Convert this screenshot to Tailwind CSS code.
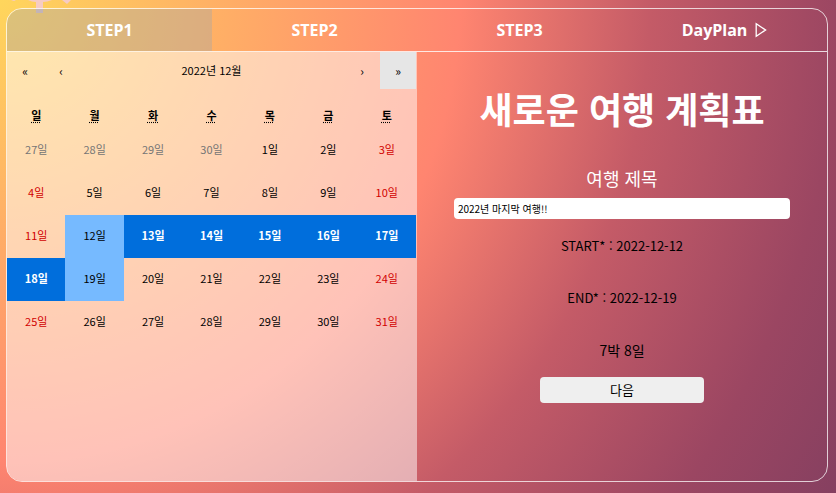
<!DOCTYPE html>
<html lang="ko">
<head>
<meta charset="utf-8">
<meta name="viewport" content="width=device-width, initial-scale=1">
<title>DayPlan</title>
<script src="https://cdn.jsdelivr.net/npm/@tailwindcss/browser@4"></script>
</head>
<body class="relative min-h-screen flex flex-col pt-2 pb-[11px] pl-1.5 pr-2 font-['Noto_Sans_CJK_KR',sans-serif] text-black bg-[radial-gradient(circle_at_top_left,#ffd65c_0px,#ff8570_460px,#c45b67_650px,#9b4662_840px,#843f60_980px)]">
<svg class="absolute left-0 top-0 w-20 h-4" viewBox="0 0 80 16" aria-hidden="true">
<path d="M28 0H52Q47 2 43 2V8H36V2Q32 2 28 0Z M11 0H16L14 1Z M62 0H71L67 4Z" fill="#f6cbc4"/>
<path d="M36 8H43V13H36Z" fill="#d6bcc0"/>
</svg>
<main class="relative flex-1 flex flex-col border border-white/75 rounded-2xl overflow-hidden">
<nav class="grid grid-cols-4 h-[42px] shrink-0 box-content border-b border-white/80 text-white text-base font-bold font-['Open_Sans','Noto_Sans_CJK_KR',sans-serif]">
<a href="#step1" class="flex items-center justify-center bg-[#a8a8a8]/40">STEP1</a>
<a href="#step2" class="flex items-center justify-center">STEP2</a>
<a href="#step3" class="flex items-center justify-center">STEP3</a>
<a href="#dayplan" class="flex items-center justify-center gap-2">DayPlan
<svg class="w-3 h-4" viewBox="0 0 12 16" fill="none" stroke="white" stroke-width="1.3" aria-hidden="true"><path d="M1.2 1.8V14.2L10.6 8Z"/></svg></a>
</nav>
<div class="flex-1 grid grid-cols-2">
<section class="bg-white/50 text-[11px] pr-px">
<div class="flex h-[37px]">
<button class="w-9 text-xs" aria-label="이전 해">«</button>
<button class="w-9 text-xs" aria-label="이전 달">‹</button>
<button class="flex-1">2022년 12월</button>
<button class="w-9 text-xs" aria-label="다음 달">›</button>
<button class="w-9 text-xs bg-[#e6e6e6]" aria-label="다음 해">»</button>
</div>
<table class="w-full table-fixed text-center">
<thead><tr class="h-10 font-bold">
<th class="pt-3"><abbr class="underline-offset-2" title="일요일">일</abbr></th><th class="pt-3"><abbr class="underline-offset-2" title="월요일">월</abbr></th><th class="pt-3"><abbr class="underline-offset-2" title="화요일">화</abbr></th><th class="pt-3"><abbr class="underline-offset-2" title="수요일">수</abbr></th><th class="pt-3"><abbr class="underline-offset-2" title="목요일">목</abbr></th><th class="pt-3"><abbr class="underline-offset-2" title="금요일">금</abbr></th><th class="pt-3"><abbr class="underline-offset-2" title="토요일">토</abbr></th>
</tr></thead>
<tbody>
<tr class="text-[#757575]"><td class="p-0"><button class="w-full h-[43px] pb-0.5">27일</button></td><td class="p-0"><button class="w-full h-[43px] pb-0.5">28일</button></td><td class="p-0"><button class="w-full h-[43px] pb-0.5">29일</button></td><td class="p-0"><button class="w-full h-[43px] pb-0.5">30일</button></td><td class="p-0"><button class="w-full h-[43px] pb-0.5 text-black">1일</button></td><td class="p-0"><button class="w-full h-[43px] pb-0.5 text-black">2일</button></td><td class="p-0"><button class="w-full h-[43px] pb-0.5 text-[#d10000]">3일</button></td></tr>
<tr><td class="p-0"><button class="w-full h-[43px] pb-0.5 text-[#d10000]">4일</button></td><td class="p-0"><button class="w-full h-[43px] pb-0.5">5일</button></td><td class="p-0"><button class="w-full h-[43px] pb-0.5">6일</button></td><td class="p-0"><button class="w-full h-[43px] pb-0.5">7일</button></td><td class="p-0"><button class="w-full h-[43px] pb-0.5">8일</button></td><td class="p-0"><button class="w-full h-[43px] pb-0.5">9일</button></td><td class="p-0"><button class="w-full h-[43px] pb-0.5 text-[#d10000]">10일</button></td></tr>
<tr><td class="p-0"><button class="w-full h-[43px] pb-0.5 text-[#d10000]">11일</button></td><td class="p-0"><button class="w-full h-[43px] pb-0.5 bg-[#76baff]">12일</button></td><td class="p-0"><button class="w-full h-[43px] pb-0.5 bg-[#006edc] text-white font-bold">13일</button></td><td class="p-0"><button class="w-full h-[43px] pb-0.5 bg-[#006edc] text-white font-bold">14일</button></td><td class="p-0"><button class="w-full h-[43px] pb-0.5 bg-[#006edc] text-white font-bold">15일</button></td><td class="p-0"><button class="w-full h-[43px] pb-0.5 bg-[#006edc] text-white font-bold">16일</button></td><td class="p-0"><button class="w-full h-[43px] pb-0.5 bg-[#006edc] text-white font-bold">17일</button></td></tr>
<tr><td class="p-0"><button class="w-full h-[43px] pb-0.5 bg-[#006edc] text-white font-bold">18일</button></td><td class="p-0"><button class="w-full h-[43px] pb-0.5 bg-[#76baff]">19일</button></td><td class="p-0"><button class="w-full h-[43px] pb-0.5">20일</button></td><td class="p-0"><button class="w-full h-[43px] pb-0.5">21일</button></td><td class="p-0"><button class="w-full h-[43px] pb-0.5">22일</button></td><td class="p-0"><button class="w-full h-[43px] pb-0.5">23일</button></td><td class="p-0"><button class="w-full h-[43px] pb-0.5 text-[#d10000]">24일</button></td></tr>
<tr><td class="p-0"><button class="w-full h-[43px] pb-0.5 text-[#d10000]">25일</button></td><td class="p-0"><button class="w-full h-[43px] pb-0.5">26일</button></td><td class="p-0"><button class="w-full h-[43px] pb-0.5">27일</button></td><td class="p-0"><button class="w-full h-[43px] pb-0.5">28일</button></td><td class="p-0"><button class="w-full h-[43px] pb-0.5">29일</button></td><td class="p-0"><button class="w-full h-[43px] pb-0.5">30일</button></td><td class="p-0"><button class="w-full h-[43px] pb-0.5 text-[#d10000]">31일</button></td></tr>
</tbody>
</table>
</section>
<form class="flex flex-col items-center pt-[30px] text-[13px] leading-5">
<h1 class="text-4xl leading-[52px] font-bold text-white">새로운 여행 계획표</h1>
<label for="title" class="mt-8 text-lg leading-6 text-white">여행 제목</label>
<input id="title" type="text" value="2022년 마지막 여행!!" class="mt-2 w-[82%] h-[21px] rounded bg-white px-1 text-[10px]">
<p class="mt-[17px]">START* : 2022-12-12</p>
<p class="mt-8">END* : 2022-12-19</p>
<p class="mt-8 text-sm leading-5">7박 8일</p>
<button type="button" class="mt-[17px] w-2/5 h-[26px] rounded bg-[#efefef]">다음</button>
</form>
</div>
</main>
</body>
</html>
